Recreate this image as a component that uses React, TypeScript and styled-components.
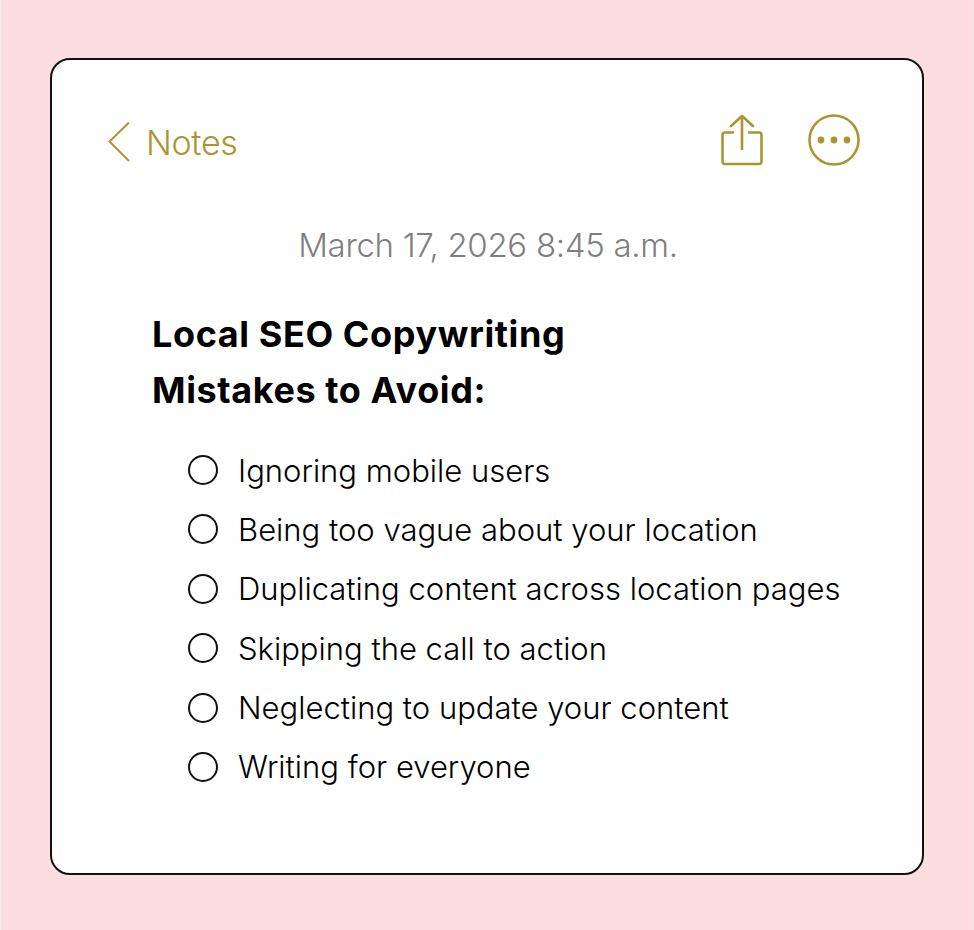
import styled, { createGlobalStyle } from "styled-components";

const GlobalStyle = createGlobalStyle`
  html, body {
    margin: 0;
    padding: 0;
    background: #fbdde2;
  }
`;

const Page = styled.div`
  box-sizing: border-box;
  width: 974px;
  height: 930px;
  padding: 58px 49px 55px 49px;
  background: #fbdde2;
  border-left: 1px solid #f3eef0;
  border-right: 1px solid #f7e6ea;
  font-family: Inter, "Liberation Sans", sans-serif;
`;

const Card = styled.main`
  box-sizing: border-box;
  height: 817px;
  padding: 52px 61px 0 55px;
  background: #fff;
  border: 2px solid #111;
  border-radius: 20px;
`;

const TopBar = styled.header`
  display: flex;
  align-items: center;
  justify-content: space-between;
  height: 56px;
`;

const BackLink = styled.div`
  display: flex;
  align-items: center;
  gap: 15px;
  color: #ab9533;
  font-size: 34px;
  font-weight: 300;
  letter-spacing: -0.3px;
  padding-top: 3px;
`;

const BackLabel = styled.span`
  padding-top: 2px;
`;

const Actions = styled.div`
  display: flex;
  align-items: center;
  gap: 44px;
`;

const DateLine = styled.div`
  margin-top: 55px;
  padding-left: 8px;
  text-align: center;
  color: #7f7f7f;
  font-size: 33px;
  font-weight: 300;
  line-height: 44px;
  letter-spacing: -0.3px;
`;

const Title = styled.h1`
  margin: 39px 0 0 45px;
  color: #000;
  font-size: 36px;
  font-weight: 700;
  line-height: 56px;
  letter-spacing: 0.6px;
`;

const List = styled.ul`
  display: flex;
  flex-direction: column;
  gap: 19.4px;
  margin: 32px 0 0 81px;
  padding: 0;
  list-style: none;
`;

const Item = styled.li`
  display: flex;
  align-items: center;
  gap: 20px;
  height: 40px;
  color: #000;
  font-size: 31px;
  font-weight: 300;
  white-space: nowrap;
`;

const Circle = styled.span`
  box-sizing: border-box;
  flex: none;
  width: 30px;
  height: 30px;
  border: 2px solid #111;
  border-radius: 50%;
`;

const items = [
  "Ignoring mobile users",
  "Being too vague about your location",
  "Duplicating content across location pages",
  "Skipping the call to action",
  "Neglecting to update your content",
  "Writing for everyone",
];

function ChevronIcon() {
  return (
    <svg width="24" height="42" viewBox="0 0 24 42" fill="none">
      <path d="M22 1.5 2.5 20.5 22 40" stroke="#ab9533" strokeWidth="2" />
    </svg>
  );
}

function ShareIcon() {
  return (
    <svg width="42" height="52" viewBox="0 0 42 52" fill="none" stroke="#ab9533" strokeWidth="2.6" strokeLinecap="round" strokeLinejoin="round">
      <path d="M12 18.5H4a2.5 2.5 0 0 0-2.5 2.5v26.500A2.500 2.500 0 0 0 4 50h34a2.500 2.500 0 0 0 2.500-2.500V21a2.500 2.500 0 0 0-2.500-2.500h-10" />
      <path d="M21 35V2" />
      <path d="M10 12 21 2l11 10" />
    </svg>
  );
}

function MoreIcon() {
  return (
    <svg width="54" height="54" viewBox="0 0 54 54" fill="none">
      <circle cx="27" cy="27" r="24.5" stroke="#ab9533" strokeWidth="2.6" />
      <circle cx="14" cy="27" r="3.4" fill="#ab9533" />
      <circle cx="27" cy="27" r="3.4" fill="#ab9533" />
      <circle cx="40" cy="27" r="3.4" fill="#ab9533" />
    </svg>
  );
}

export default function App() {
  return (
    <>
      <GlobalStyle />
      <Page>
        <Card>
          <TopBar>
            <BackLink>
              <ChevronIcon />
              <BackLabel>Notes</BackLabel>
            </BackLink>
            <Actions>
              <ShareIcon />
              <MoreIcon />
            </Actions>
          </TopBar>
          <DateLine>March 17, 2026 8:45 a.m.</DateLine>
          <Title>
            Local SEO Copywriting
            <br />
            Mistakes to Avoid:
          </Title>
          <List>
            {items.map((text) => (
              <Item key={text}>
                <Circle />
                {text}
              </Item>
            ))}
          </List>
        </Card>
      </Page>
    </>
  );
}
